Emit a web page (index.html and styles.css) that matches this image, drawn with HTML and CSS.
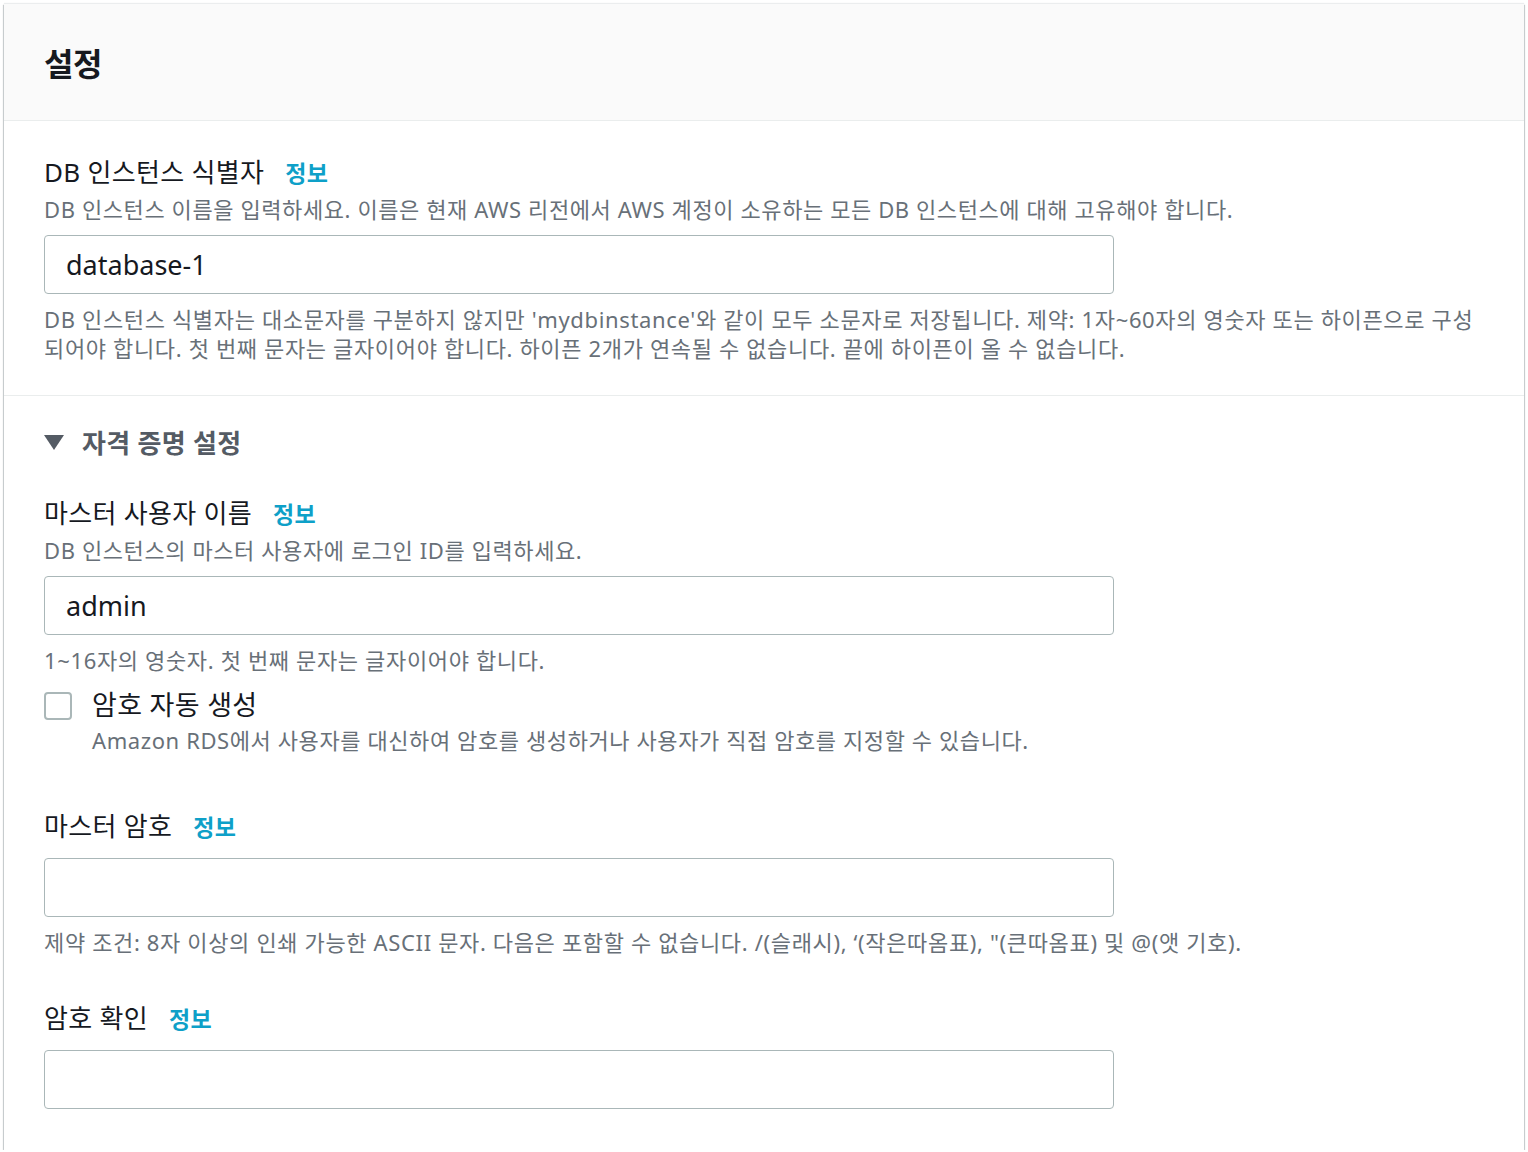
FILE: index.html
```html
<!DOCTYPE html>
<html lang="ko">
<head>
    <meta charset="UTF-8">
    <title>설정</title>
    <link rel="stylesheet" href="styles.css">
</head>
<body>
    <div class="panel">
        <div class="panel-header">
            <h2 class="panel-title">설정</h2>
        </div>

        <!-- DB instance identifier -->
        <div class="section">
            <div class="field">
                <div class="label">DB 인스턴스 식별자 <a class="info">정보</a></div>
                <div class="desc">DB 인스턴스 이름을 입력하세요. 이름은 현재 AWS 리전에서 AWS 계정이 소유하는 모든 DB 인스턴스에 대해 고유해야 합니다.</div>
                <input class="input" type="text" value="database-1">
                <div class="hint">DB 인스턴스 식별자는 대소문자를 구분하지 않지만 'mydbinstance'와 같이 모두 소문자로 저장됩니다. 제약: 1자~60자의 영숫자 또는 하이픈으로 구성되어야 합니다. 첫 번째 문자는 글자이어야 합니다. 하이픈 2개가 연속될 수 없습니다. 끝에 하이픈이 올 수 없습니다.</div>
            </div>
        </div>

        <!-- Credentials -->
        <div class="section section-credentials">
            <div class="expand">
                <span class="caret"></span>
                <span class="expand-title">자격 증명 설정</span>
            </div>

            <div class="field">
                <div class="label">마스터 사용자 이름 <a class="info">정보</a></div>
                <div class="desc">DB 인스턴스의 마스터 사용자에 로그인 ID를 입력하세요.</div>
                <input class="input" type="text" value="admin">
                <div class="hint">1~16자의 영숫자. 첫 번째 문자는 글자이어야 합니다.</div>
            </div>

            <div class="checkbox-row">
                <span class="checkbox"></span>
                <div>
                    <div class="checkbox-label">암호 자동 생성</div>
                    <div class="desc">Amazon RDS에서 사용자를 대신하여 암호를 생성하거나 사용자가 직접 암호를 지정할 수 있습니다.</div>
                </div>
            </div>

            <div class="field field-password">
                <div class="label">마스터 암호 <a class="info">정보</a></div>
                <input class="input" type="password">
                <div class="hint">제약 조건: 8자 이상의 인쇄 가능한 ASCII 문자. 다음은 포함할 수 없습니다. /(슬래시), ‘(작은따옴표), "(큰따옴표) 및 @(앳 기호).</div>
            </div>

            <div class="field field-confirm">
                <div class="label">암호 확인 <a class="info">정보</a></div>
                <input class="input" type="password">
            </div>
        </div>
    </div>
</body>
</html>
```

FILE: styles.css
```css
body {
    margin: 0;
    padding: 4px 4px 0 4px;
    background-color: #ffffff;
    font-family: 'Noto Sans', 'Noto Sans CJK KR', sans-serif;
    color: #16191f;
}
.panel {
    background-color: #fff;
    box-shadow: 0 1px 1px 0 rgba(0, 28, 36, 0.4), 1px 1px 1px 0 rgba(0, 28, 36, 0.15), -1px 1px 1px 0 rgba(0, 28, 36, 0.15), 0 -1px 1px 0 rgba(0, 28, 36, 0.08);
    width: 1520px;
    height: 1146px;
}
.panel-header {
    background-color: #fafafa;
    border-bottom: 1px solid #eaeded;
    height: 116px;
    padding: 0 40px;
    display: flex;
    align-items: center;
}
.panel-title {
    margin: 0;
    font-size: 32px;
    font-weight: 700;
    letter-spacing: -0.5px;
}
.section {
    padding: 34px 40px 32px 40px;
    border-bottom: 1px solid #eaeded;
}
.section-credentials {
    border-bottom: none;
    padding-top: 26px;
}
.label {
    font-size: 26px;
    line-height: 34px;
    letter-spacing: 0.3px;
}
.info {
    color: #0ea0c8;
    font-weight: 700;
    font-size: 23px;
    margin-left: 14px;
}
.desc {
    color: #687078;
    font-size: 22px;
    line-height: 30px;
    letter-spacing: 0.6px;
    margin-top: 4px;
}
.input {
    display: block;
    box-sizing: border-box;
    width: 1070px;
    height: 59px;
    margin-top: 11px;
    padding: 0 21px;
    border: 1px solid #aab7b8;
    border-radius: 4px;
    font-family: 'Noto Sans', 'Noto Sans CJK KR', sans-serif;
    font-size: 27px;
    color: #16191f;
    background-color: #fff;
}
.hint {
    color: #687078;
    font-size: 22px;
    line-height: 29px;
    letter-spacing: 0.65px;
    margin-top: 11px;
}
.expand {
    display: flex;
    align-items: center;
    gap: 18px;
    height: 40px;
}
.caret {
    width: 0;
    height: 0;
    border-left: 10px solid transparent;
    border-right: 10px solid transparent;
    border-top: 15px solid #545b64;
}
.expand-title {
    color: #545b64;
    font-size: 26px;
    font-weight: 700;
    letter-spacing: 0.3px;
}
.section-credentials .field {
    margin-top: 34px;
}
.checkbox-row {
    display: flex;
    gap: 20px;
    margin-top: 13px;
}
.checkbox {
    box-sizing: border-box;
    width: 28px;
    height: 28px;
    border: 2px solid #aab7b8;
    border-radius: 4px;
    margin-top: 4px;
    flex: none;
}
.checkbox-label {
    font-size: 27px;
    line-height: 34px;
    letter-spacing: 0.3px;
}
.checkbox-row .desc {
    margin-top: 3px;
}
.section-credentials .field-password {
    margin-top: 54px;
}
.section-credentials .field-password .input {
    margin-top: 14px;
}
.section-credentials .field-confirm {
    margin-top: 44px;
}
.section-credentials .field-confirm .input {
    margin-top: 14px;
}
```
